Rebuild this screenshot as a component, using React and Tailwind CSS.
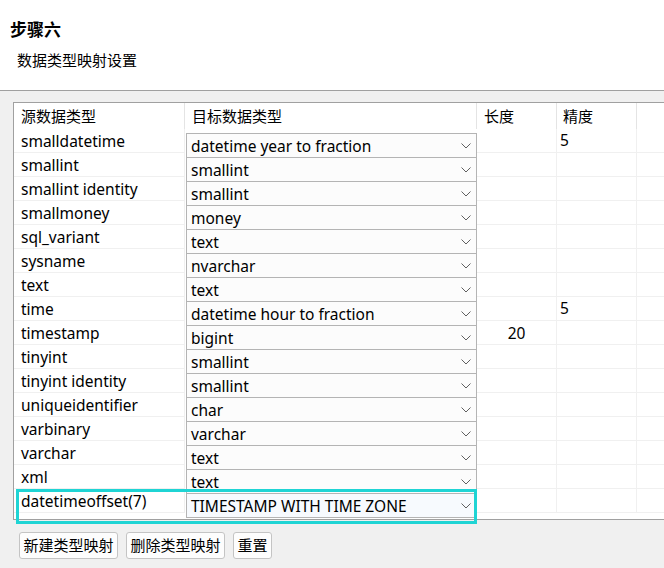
import React from 'react';

const rows = [
  { src: 'smalldatetime', dst: 'datetime year to fraction', len: '', prec: '5' },
  { src: 'smallint', dst: 'smallint', len: '', prec: '' },
  { src: 'smallint identity', dst: 'smallint', len: '', prec: '' },
  { src: 'smallmoney', dst: 'money', len: '', prec: '' },
  { src: 'sql_variant', dst: 'text', len: '', prec: '' },
  { src: 'sysname', dst: 'nvarchar', len: '', prec: '' },
  { src: 'text', dst: 'text', len: '', prec: '' },
  { src: 'time', dst: 'datetime hour to fraction', len: '', prec: '5' },
  { src: 'timestamp', dst: 'bigint', len: '20', prec: '' },
  { src: 'tinyint', dst: 'smallint', len: '', prec: '' },
  { src: 'tinyint identity', dst: 'smallint', len: '', prec: '' },
  { src: 'uniqueidentifier', dst: 'char', len: '', prec: '' },
  { src: 'varbinary', dst: 'varchar', len: '', prec: '' },
  { src: 'varchar', dst: 'text', len: '', prec: '' },
  { src: 'xml', dst: 'text', len: '', prec: '' },
  { src: 'datetimeoffset(7)', dst: 'TIMESTAMP WITH TIME ZONE', len: '', prec: '', active: true },
];

const Chevron = () => (
  <svg width="10" height="6" viewBox="0 0 10 6" className="shrink-0">
    <path d="M0.5 0.5 L5 5 L9.5 0.5" fill="none" stroke="#606060" strokeWidth="1" />
  </svg>
);

const Row = ({ row, last }) => (
  <div className="flex h-[24px] text-[15.5px]">
    <div className="w-[171px] shrink-0 border-r border-b border-[#f0f0f0] pl-[7px] leading-[24px]">
      {row.src}
    </div>
    <div className="w-[292px] shrink-0">
      <div
        className={`mt-[4px] ml-[1px] h-[24px] flex items-center justify-between pl-[4px] pr-[5px] border-t border-l border-r border-[#b4b4b4] ${
          last ? 'border-b h-[25px]' : ''
        } ${row.active ? 'bg-[#f7fafe]' : 'bg-[#fcfcfc]'}`}
      >
        <span className="leading-[22px]">{row.dst}</span>
        <Chevron />
      </div>
    </div>
    <div className="w-[80px] shrink-0 border-r border-b border-[#f0f0f0] text-center leading-[24px]">
      {row.len}
    </div>
    <div className="w-[80px] shrink-0 border-r border-b border-[#f0f0f0] pl-[3px] leading-[22px]">
      {row.prec}
    </div>
    <div className="flex-1 border-b border-[#f0f0f0]" />
  </div>
);

const Button = ({ children, w }) => (
  <button className={`${w} h-[27px] rounded-[3px] border border-[#c4c4c4] bg-[#fdfdfd] text-[15px] leading-[25px] text-black`}>
    {children}
  </button>
);

export default function App() {
  return (
    <div className="relative w-[664px] h-[568px] overflow-hidden bg-[#f0f0f0] text-black font-['Noto_Sans','Noto_Sans_CJK_SC',sans-serif]">
      <div className="h-[91px] bg-white border-b border-[#a0a0a0] pl-[10px] pt-[19px]">
        <div className="text-[17px] font-bold leading-[22px]">步骤六</div>
        <div className="ml-[7px] mt-[9px] text-[15px] leading-[20px]">数据类型映射设置</div>
      </div>

      <div className="pl-[13px] pt-[11px]">
        <div className="w-[700px] h-[418px] border-l border-t border-b border-[#a0a0a0] bg-white text-[15px] overflow-hidden">
          <div className="flex h-[26px] leading-[26px]">
            <div className="w-[171px] shrink-0 border-r border-[#e4e4e4] pl-[7px]">源数据类型</div>
            <div className="w-[292px] shrink-0 border-r border-[#e4e4e4] pl-[7px]">目标数据类型</div>
            <div className="w-[80px] shrink-0 border-r border-[#e4e4e4] pl-[7px]">长度</div>
            <div className="w-[80px] shrink-0 border-r border-[#e4e4e4] pl-[6px]">精度</div>
            <div className="flex-1" />
          </div>
          {rows.map((row, i) => (
            <Row key={row.src} row={row} last={i === rows.length - 1} />
          ))}
        </div>

        <div className="flex gap-[8px] ml-[6px] mt-[12px]">
          <Button w="w-[99px]">新建类型映射</Button>
          <Button w="w-[99px]">删除类型映射</Button>
          <Button w="w-[39px]">重置</Button>
        </div>
      </div>

      {/* selection frame around the edited mapping */}
      <div className="absolute left-[16px] top-[489px] w-[461px] h-[35px] border-[3px] border-[#1fd4d4] pointer-events-none" />
    </div>
  );
}
